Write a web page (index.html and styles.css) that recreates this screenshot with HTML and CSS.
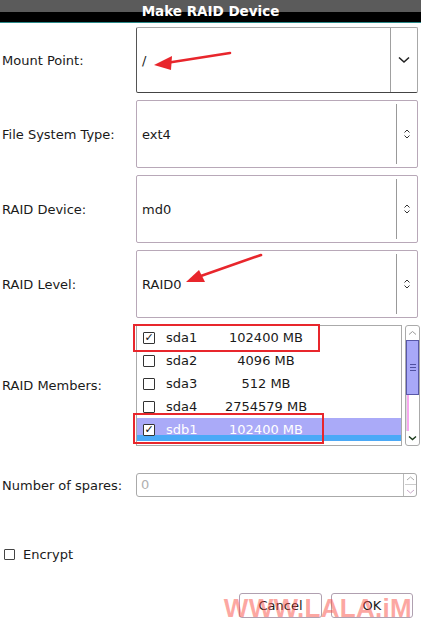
FILE: index.html
```html
<!DOCTYPE html>
<html>
<head>
<meta charset="utf-8">
<link rel="stylesheet" href="styles.css">
</head>
<body>
<div class="titlebar"><span class="title">Make RAID Device</span></div>
<div class="form">
  <div class="row r-mount">
    <div class="label">Mount Point:</div>
    <div class="combo entry">
      <div class="value">/</div>
      <div class="btn-drop">
        <svg width="12" height="8" viewBox="0 0 12 8"><polyline points="1,1.5 6,6 11,1.5" fill="none" stroke="#222" stroke-width="1.6"/></svg>
      </div>
    </div>
  </div>
  <div class="row r-fs">
    <div class="label">File System Type:</div>
    <div class="combo">
      <div class="value">ext4</div>
      <div class="sep"></div>
      <div class="updown">
        <svg width="8" height="12" viewBox="0 0 8 12"><polyline points="1.5,4.5 4,2 6.5,4.5" fill="none" stroke="#333" stroke-width="1"/><polyline points="1.5,7.5 4,10 6.5,7.5" fill="none" stroke="#333" stroke-width="1"/></svg>
      </div>
    </div>
  </div>
  <div class="row r-dev">
    <div class="label">RAID Device:</div>
    <div class="combo">
      <div class="value">md0</div>
      <div class="sep"></div>
      <div class="updown">
        <svg width="8" height="12" viewBox="0 0 8 12"><polyline points="1.5,4.5 4,2 6.5,4.5" fill="none" stroke="#333" stroke-width="1"/><polyline points="1.5,7.5 4,10 6.5,7.5" fill="none" stroke="#333" stroke-width="1"/></svg>
      </div>
    </div>
  </div>
  <div class="row r-level">
    <div class="label">RAID Level:</div>
    <div class="combo">
      <div class="value">RAID0</div>
      <div class="sep"></div>
      <div class="updown">
        <svg width="8" height="12" viewBox="0 0 8 12"><polyline points="1.5,4.5 4,2 6.5,4.5" fill="none" stroke="#333" stroke-width="1"/><polyline points="1.5,7.5 4,10 6.5,7.5" fill="none" stroke="#333" stroke-width="1"/></svg>
      </div>
    </div>
  </div>
  <div class="row r-members">
    <div class="label">RAID Members:</div>
    <div class="members">
      <div class="list">
        <div class="item"><span class="cb checked">✓</span><span class="name">sda1</span><span class="size">102400 MB</span></div>
        <div class="item"><span class="cb"></span><span class="name">sda2</span><span class="size">4096 MB</span></div>
        <div class="item"><span class="cb"></span><span class="name">sda3</span><span class="size">512 MB</span></div>
        <div class="item"><span class="cb"></span><span class="name">sda4</span><span class="size">2754579 MB</span></div>
        <div class="item selected"><span class="cb checked">✓</span><span class="name">sdb1</span><span class="size">102400 MB</span></div>
        <div class="mark mark1"></div>
        <div class="mark mark2"></div>
      </div>
      <div class="scrollbar">
        <div class="sb-up"><svg width="9" height="6" viewBox="0 0 9 6"><polyline points="1,4.5 4.5,1.5 8,4.5" fill="none" stroke="#999" stroke-width="1"/></svg></div>
        <div class="sb-thumb"><span></span><span></span><span></span></div>
        <div class="sb-track"></div>
        <div class="sb-down"><svg width="9" height="6" viewBox="0 0 9 6"><polyline points="1,1.5 4.5,4.5 8,1.5" fill="none" stroke="#1a3a1a" stroke-width="1.4"/></svg></div>
      </div>
    </div>
  </div>
  <div class="row r-spares">
    <div class="label">Number of spares:</div>
    <div class="spin">
      <div class="spin-value">0</div>
      <div class="spin-btns">
        <svg width="9" height="5" viewBox="0 0 9 5"><polyline points="1,4 4.5,1 8,4" fill="none" stroke="#aaa" stroke-width="1"/></svg>
        <div class="spin-sep"></div>
        <svg width="9" height="5" viewBox="0 0 9 5"><polyline points="1,1 4.5,4 8,1" fill="none" stroke="#c9a9c9" stroke-width="1"/></svg>
      </div>
    </div>
  </div>
  <div class="encrypt"><span class="cb"></span><span>Encrypt</span></div>
  <div class="buttons">
    <div class="button">Cancel</div>
    <div class="button">OK</div>
    <div class="watermark">WWW.LALA.iM</div>
  </div>
</div>
<svg class="arrow arrow1" width="80" height="24" viewBox="0 0 80 24"><line x1="78" y1="3" x2="14" y2="13" stroke="#e8262c" stroke-width="2.6" stroke-linecap="round"/><polygon points="2,15 20,6 19,20" fill="#e8262c"/></svg>
<svg class="arrow arrow2" width="80" height="34" viewBox="0 0 80 34"><line x1="77" y1="3" x2="14" y2="25" stroke="#e8262c" stroke-width="2.6" stroke-linecap="round"/><polygon points="2,30 15,18 21,30" fill="#e8262c"/></svg>
</body>
</html>
```
FILE: styles.css
```css
html, body {
  margin: 0;
  padding: 0;
  background: #ffffff;
}
body {
  width: 421px;
  height: 628px;
  position: relative;
  overflow: hidden;
  font-family: "DejaVu Sans", sans-serif;
  font-size: 13px;
  color: #1a1a1a;
}
.titlebar {
  height: 22px;
  background: linear-gradient(#5b5b5b 0, #5b5b5b 12px, #000 12px, #000 22px);
  border-bottom: 1px solid #2a8a8a;
  text-align: center;
}
.title {
  display: inline-block;
  color: #fff;
  font-weight: bold;
  font-size: 13.5px;
  line-height: 22px;
}
.form {
  padding-top: 4px;
}
.row {
  display: flex;
  align-items: center;
  margin-bottom: 7px;
}
.label {
  width: 136px;
  padding-left: 2px;
  box-sizing: border-box;
  flex: none;
}
.combo {
  width: 282px;
  box-sizing: border-box;
  border: 1px solid #b8a8b8;
  border-radius: 2px;
  display: flex;
  align-items: center;
  background: #fff;
}
.r-mount .combo { height: 66px; }
.r-fs .combo, .r-dev .combo, .r-level .combo { height: 68px; }
.combo.entry {
  border-color: #a8a8a8;
  border-left-color: #555;
  border-bottom-color: #444;
}
.value {
  flex: 1;
  padding-left: 5px;
}
.btn-drop {
  width: 26px;
  align-self: stretch;
  border-left: 1px solid #a0a0a0;
  display: flex;
  align-items: center;
  justify-content: center;
}
.sep {
  width: 1px;
  height: 60px;
  background: #999;
}
.updown {
  width: 20px;
  display: flex;
  justify-content: center;
  align-items: center;
}
.members {
  display: flex;
  height: 121px;
}
.r-members { margin-bottom: 27px; }
.list {
  width: 266px;
  box-sizing: border-box;
  border: 1px solid #aaa;
  position: relative;
}
.item {
  height: 23px;
  display: flex;
  align-items: center;
  padding-left: 6px;
}
.item.selected {
  background: linear-gradient(#aaaaf8 0, #aaaaf8 17px, #4ba9f7 17px, #4ba9f7 23px);
  color: #fff;
}
.cb {
  width: 12px;
  height: 12px;
  box-sizing: border-box;
  border: 1px solid #333;
  border-radius: 1px;
  background: #fff;
  color: #111;
  font-size: 11px;
  line-height: 10px;
  text-align: center;
  flex: none;
}
.name {
  width: 55px;
  padding-left: 11px;
}
.size {
  width: 90px;
  text-align: center;
}
.mark {
  position: absolute;
  border: 2px solid #e8262c;
}
.mark1 { left: -4px; top: -2px; width: 183px; height: 24px; }
.mark2 { left: -4px; top: 87px; width: 187px; height: 27px; }
.scrollbar {
  width: 15px;
  margin-left: 3px;
  box-sizing: border-box;
  border: 1px solid #aaa;
  border-radius: 3px;
  display: flex;
  flex-direction: column;
}
.sb-up {
  height: 14px;
  display: flex;
  align-items: center;
  justify-content: center;
}
.sb-thumb {
  height: 55px;
  box-sizing: border-box;
  background: #a8a8f8;
  border: 1px solid #5858a8;
  display: flex;
  flex-direction: column;
  align-items: center;
  justify-content: center;
  gap: 2px;
}
.sb-thumb span {
  width: 6px;
  height: 1px;
  background: #5050a0;
}
.sb-track {
  flex: 1;
  background: linear-gradient(90deg, #ddd 0, #ddd 1px, #f8a8f0 1px, #f8a8f0 3px, #fff 3px);
}
.sb-down {
  height: 14px;
  display: flex;
  align-items: center;
  justify-content: center;
}
.r-spares { margin-bottom: 0; }
.spin {
  width: 281px;
  height: 24px;
  box-sizing: border-box;
  border: 1px solid #aaa;
  border-radius: 3px;
  display: flex;
  align-items: stretch;
}
.spin-value {
  flex: 1;
  padding-left: 4px;
  color: #b0b0b0;
  line-height: 22px;
}
.spin-btns {
  width: 12px;
  border-left: 1px solid #bbb;
  display: flex;
  flex-direction: column;
  align-items: center;
  justify-content: space-around;
}
.spin-sep {
  width: 11px;
  height: 1px;
  background: #ccc;
}
.encrypt {
  margin-top: 50px;
  padding-left: 4px;
  display: flex;
  align-items: center;
  gap: 8px;
}
.encrypt .cb { border-color: #444; width: 11px; height: 11px; }
.buttons {
  margin-top: 31px;
  display: flex;
  justify-content: flex-end;
  gap: 9px;
  padding-right: 8px;
  position: relative;
}
.button {
  width: 83px;
  height: 25px;
  box-sizing: border-box;
  border: 1px solid #b0a0b0;
  border-radius: 3px;
  text-align: center;
  line-height: 23px;
  background: #fff;
}
.button + .button { width: 82px; }
.watermark {
  position: absolute;
  right: 9px;
  top: 1px;
  font-family: "Liberation Sans", sans-serif;
  font-weight: bold;
  font-size: 26px;
  line-height: 28px;
  color: rgba(250, 80, 70, 0.5);
  letter-spacing: 0.3px;
  pointer-events: none;
}
.arrow {
  position: absolute;
}
.arrow1 { left: 152px; top: 50px; }
.arrow2 { left: 184px; top: 252px; }
```
